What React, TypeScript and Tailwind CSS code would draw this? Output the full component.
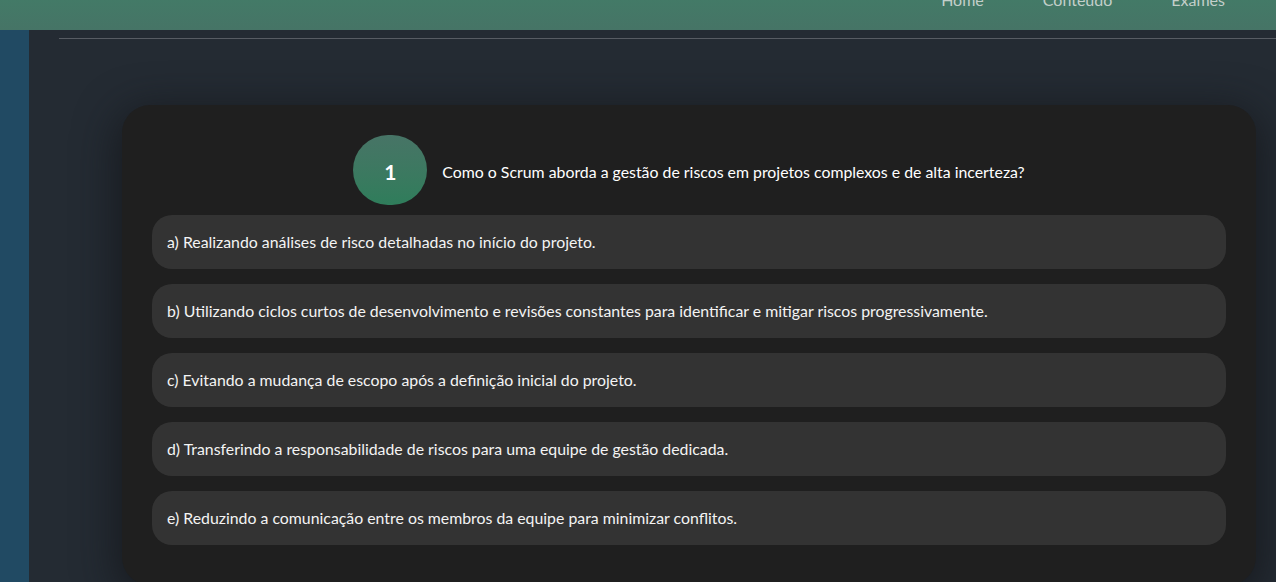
const options = [
  "a) Realizando análises de risco detalhadas no início do projeto.",
  "b) Utilizando ciclos curtos de desenvolvimento e revisões constantes para identificar e mitigar riscos progressivamente.",
  "c) Evitando a mudança de escopo após a definição inicial do projeto.",
  "d) Transferindo a responsabilidade de riscos para uma equipe de gestão dedicada.",
  "e) Reduzindo a comunicação entre os membros da equipe para minimizar conflitos.",
]

export default function App() {
  return (
    <div className="h-[582px] w-full overflow-hidden bg-[#242b33] font-['Lato','Liberation_Sans',sans-serif]">
      {/* Top bar (scrolled partly out of view) */}
      <header className="h-[30px] overflow-hidden bg-gradient-to-b from-[#437a67] to-[#467466]">
        <nav className="-mt-[12px] flex justify-end gap-[59px] pr-[51px] text-[16px] leading-[24px] text-[#c3cfca]">
          <a href="#">Home</a>
          <a href="#">Conteúdo</a>
          <a href="#">Exames</a>
        </nav>
      </header>

      <div className="flex h-[552px]">
        <aside className="w-[29px] shrink-0 bg-[#214a63]" />

        <main className="flex-1">
          <div className="ml-[30px] mt-[8px] border-t border-[#575c63]" />

          <section className="ml-[93px] mr-[20px] mt-[66px] rounded-[28px] bg-[#1f1f1f] px-[30px] pt-[30px] pb-[40px] shadow-[0_10px_40px_6px_rgba(20,22,26,0.75)]">
            <div className="flex items-center justify-center gap-[15px]">
              <div className="flex h-[70px] w-[74px] items-center justify-center rounded-full bg-gradient-to-b from-[#477466] to-[#2f7d5b] pt-[3px] text-[21px] font-bold text-white">
                1
              </div>
              <p className="pt-[3px] text-[15.85px] text-white">
                Como o Scrum aborda a gestão de riscos em projetos complexos e de alta incerteza?
              </p>
            </div>

            <div className="mt-[10px] flex flex-col gap-[15px]">
              {options.map((opt) => (
                <button
                  key={opt}
                  className="flex h-[54px] items-center rounded-[20px] bg-[#333333] px-[15px] text-left text-[15.85px] text-[#f4f4f4]"
                >
                  {opt}
                </button>
              ))}
            </div>
          </section>
        </main>
      </div>
    </div>
  )
}
